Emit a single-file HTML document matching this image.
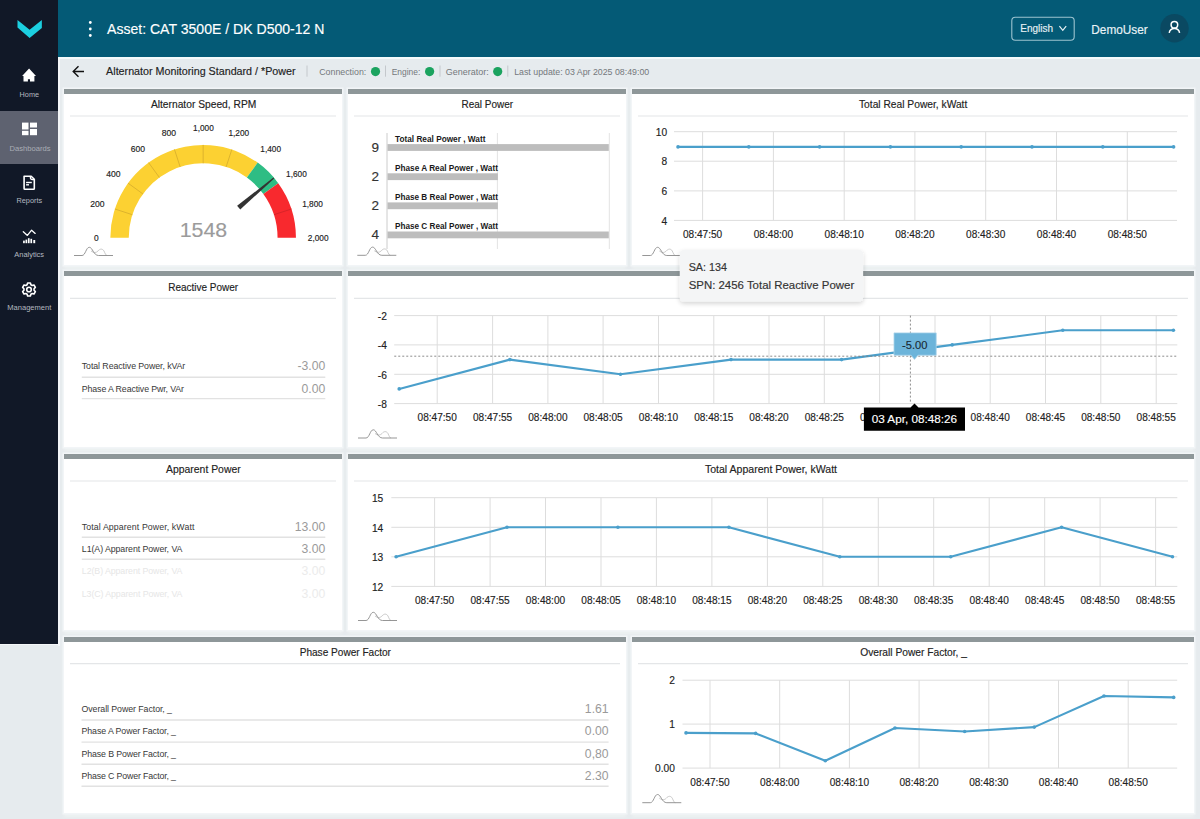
<!DOCTYPE html>
<html>
<head>
<meta charset="utf-8">
<style>
*{margin:0;padding:0;box-sizing:border-box}
html,body{width:1200px;height:819px;overflow:hidden;background:#E6EBEE;font-family:"Liberation Sans",sans-serif}
.abs{position:absolute}
#sidebar{position:absolute;left:0;top:0;width:58px;height:644px;background:#111827}
#sideedge{position:absolute;left:58px;top:0;width:2px;height:646px;background:#F4F6F8}
#sidebottom{position:absolute;left:0;top:644px;width:60px;height:1px;background:#F4F6F8}
#active{position:absolute;left:0;top:111px;width:58px;height:53px;background:#5E6270}
#header{position:absolute;left:58px;top:0;width:1142px;height:57px;background:#045A76}
.card{position:absolute;background:#FFFFFF;border-top:5px solid #8E9799;box-shadow:0 0 0 1.5px #F2F5F7,0 4px 3px #EEF2F2}
svg text{font-family:"Liberation Sans",sans-serif;stroke-width:0.15px}
#ov{position:absolute;left:0;top:0;width:1200px;height:819px}
</style>
</head>
<body>
<div id="sidebar"></div>
<div id="sideedge"></div>
<div id="sidebottom"></div>
<div id="active"></div>
<div id="header"></div>
<div class="abs" style="left:58px;top:57px;width:1142px;height:1.5px;background:#F4FAFB"></div>

<div class="card" style="left:64px;top:89px;width:278px;height:176px"></div>
<div class="card" style="left:348px;top:89px;width:278px;height:176px"></div>
<div class="card" style="left:632px;top:89px;width:562px;height:176px"></div>

<div class="card" style="left:64px;top:271px;width:278px;height:176px"></div>
<div class="card" style="left:348px;top:271px;width:846px;height:176px"></div>

<div class="card" style="left:64px;top:454px;width:278px;height:176px"></div>
<div class="card" style="left:348px;top:454px;width:846px;height:176px"></div>

<div class="card" style="left:64px;top:637px;width:562px;height:176px"></div>
<div class="card" style="left:632px;top:637px;width:562px;height:176px"></div>

<svg id="ov" width="1200" height="819" viewBox="0 0 1200 819">
<!-- logo -->
<polygon points="17.5,20 29.6,29.75 41.85,19.9 41.85,27.9 29.6,38 17.5,27.55" fill="#1CCFE0"/>

<!-- header -->
<g fill="#FFFFFF">
<circle cx="90.3" cy="22.5" r="1.4"/><circle cx="90.3" cy="29" r="1.4"/><circle cx="90.3" cy="35.5" r="1.4"/>
</g>
<text x="107" y="34.3" font-size="14.6" fill="#FFFFFF" textLength="217.5" lengthAdjust="spacingAndGlyphs" stroke="#FFFFFF" stroke-width="0.08">Asset: CAT 3500E / DK D500-12 N</text>


<!-- sidebar icons -->
<g fill="#FFFFFF">
<path d="M29.07,68.5 L36,75.9 L34.4,75.9 L34.4,81.5 L30,81.5 L30,79.2 L27.9,79.2 L27.9,81.5 L23.5,81.5 L23.5,75.9 L22.1,75.9 Z"/>
<rect x="22" y="122.6" width="6.5" height="6.9"/>
<rect x="22" y="130.8" width="6.5" height="4.4"/>
<rect x="30" y="122.6" width="7" height="4.9"/>
<rect x="30" y="129" width="7" height="6.2"/>
</g>
<g fill="none" stroke="#FFFFFF" stroke-width="1.6" stroke-linejoin="round" stroke-linecap="round">
<path d="M24.1,176.2 L31.2,176.2 L34.3,179.3 L34.3,188.6 Q34.3,189.3 33.6,189.3 L24.8,189.3 Q24.1,189.3 24.1,188.6 Z"/>
<path d="M30.4,176.6 L30.4,177.6 Q30.4,179.6 32.4,179.6 L34,179.6" stroke-width="1.3"/>
<path d="M23.3,231.8 L27.4,235.4 L31.6,230.2 L35.2,233.4" stroke-width="1.3"/>
<path d="M30.39,282.95 L27.61,282.95 L27.09,284.77 L25.86,285.48 L24.02,285.02 L22.63,287.43 L23.95,288.79 L23.95,290.21 L22.63,291.57 L24.02,293.98 L25.86,293.52 L27.09,294.23 L27.61,296.05 L30.39,296.05 L30.91,294.23 L32.14,293.52 L33.98,293.98 L35.37,291.57 L34.05,290.21 L34.05,288.79 L35.37,287.43 L33.98,285.02 L32.14,285.48 L30.91,284.77 Z"/>
<circle cx="29" cy="289.5" r="2.3"/>
</g>
<g fill="#FFFFFF">
<rect x="26.1" y="181.8" width="5.7" height="1.4"/>
<rect x="26.1" y="184.1" width="2.9" height="1.4"/>
<rect x="23.1" y="240.6" width="1.7" height="2.6"/>
<rect x="25.5" y="239.6" width="1.7" height="3.6"/>
<rect x="27.9" y="238.2" width="1.7" height="5"/>
<rect x="30.4" y="238.8" width="1.7" height="4.4"/>
<rect x="33.3" y="240" width="1.9" height="3.2"/>
</g>
<g font-size="7.2" fill="#B4B8C0" text-anchor="middle" class="ns">
<text x="29.3" y="96.8" textLength="19.4" lengthAdjust="spacingAndGlyphs">Home</text>
<text x="30" y="150.6" textLength="41" lengthAdjust="spacingAndGlyphs" fill="#A9ADB5" class="ns">Dashboards</text>
<text x="29.3" y="203.2" textLength="25.6" lengthAdjust="spacingAndGlyphs">Reports</text>
<text x="29.2" y="257" textLength="29.7" lengthAdjust="spacingAndGlyphs">Analytics</text>
<text x="29.3" y="310.3" textLength="44" lengthAdjust="spacingAndGlyphs">Management</text>
</g>

<!-- header right -->
<rect x="1011.8" y="17.2" width="62.4" height="23" rx="3.5" fill="none" stroke="#9CC3D0" stroke-width="1.1"/>
<text x="1020.3" y="32" font-size="11" fill="#E8F2F5" textLength="32.7" lengthAdjust="spacingAndGlyphs" stroke="#E8F2F5">English</text>
<polyline points="1059.4,26.2 1062.8,30.3 1066.2,26.2" fill="none" stroke="#E8F2F5" stroke-width="1.2"/>
<text x="1091.3" y="33.7" font-size="12.5" fill="#EAF3F6" textLength="56.5" lengthAdjust="spacingAndGlyphs" stroke="#EAF3F6">DemoUser</text>
<circle cx="1174.5" cy="28.2" r="14.2" fill="#0A4962"/>
<circle cx="1174.4" cy="24.7" r="3.3" fill="none" stroke="#FFFFFF" stroke-width="1.5"/>
<path d="M1169.2,32.8 A5.3,5.3 0 0 1 1179.6,32.8" fill="none" stroke="#FFFFFF" stroke-width="1.5"/>

<!-- subheader -->
<path d="M84,71.5 L73.5,71.5 M78.5,66.2 L73.2,71.5 L78.5,76.8" fill="none" stroke="#111111" stroke-width="1.4"/>
<text x="106.1" y="75" font-size="10.5" fill="#222222" textLength="189.5" lengthAdjust="spacingAndGlyphs" stroke="#222222" stroke-width="0.18">Alternator Monitoring Standard / *Power</text>
<g stroke="#C4C8CC" stroke-width="1">
<line x1="307" y1="65.5" x2="307" y2="76.7"/>
<line x1="385.5" y1="65.5" x2="385.5" y2="76.7"/>
<line x1="440" y1="65.5" x2="440" y2="76.7"/>
<line x1="507.8" y1="65.5" x2="507.8" y2="76.7"/>
</g>
<g font-size="9.3" fill="#74787C" class="ns">
<text x="319.2" y="74.7" textLength="47.1" lengthAdjust="spacingAndGlyphs">Connection:</text>
<text x="391.7" y="74.7" textLength="28.6" lengthAdjust="spacingAndGlyphs">Engine:</text>
<text x="445.8" y="74.7" textLength="42.9" lengthAdjust="spacingAndGlyphs">Generator:</text>
<text x="514.2" y="74.7" textLength="135" lengthAdjust="spacingAndGlyphs">Last update: 03 Apr 2025 08:49:00</text>
</g>
<g fill="#1BA35F">
<circle cx="375.5" cy="71.6" r="4.6"/>
<circle cx="429.6" cy="71.6" r="4.6"/>
<circle cx="497.7" cy="71.6" r="4.6"/>
</g>

<!-- card titles -->
<g font-size="10.5" fill="#222222" stroke="#222222">
<text x="150.9" y="108" textLength="105.4" lengthAdjust="spacingAndGlyphs">Alternator Speed, RPM</text>
<text x="461.5" y="108" textLength="51.5" lengthAdjust="spacingAndGlyphs">Real Power</text>
<text x="859" y="108.3" textLength="108.3" lengthAdjust="spacingAndGlyphs">Total Real Power, kWatt</text>
<text x="168.2" y="290.7" textLength="70" lengthAdjust="spacingAndGlyphs">Reactive Power</text>
<text x="166" y="473.3" textLength="74.7" lengthAdjust="spacingAndGlyphs">Apparent Power</text>
<text x="704.9" y="472.7" textLength="132.1" lengthAdjust="spacingAndGlyphs">Total Apparent Power, kWatt</text>
<text x="299.7" y="655.7" textLength="91.3" lengthAdjust="spacingAndGlyphs">Phase Power Factor</text>
<text x="860.2" y="656.2" textLength="106.8" lengthAdjust="spacingAndGlyphs">Overall Power Factor, _</text>
</g>
<!-- title dividers -->
<g stroke="#E4E6E8" stroke-width="1.2">
<line x1="70" y1="116" x2="336" y2="116"/>
<line x1="354" y1="116" x2="620" y2="116"/>
<line x1="638" y1="116" x2="1188" y2="116"/>
<line x1="70" y1="298.3" x2="336" y2="298.3"/>
<line x1="354" y1="298.3" x2="1188" y2="298.3"/>
<line x1="70" y1="481" x2="336" y2="481"/>
<line x1="354" y1="481" x2="1188" y2="481"/>
<line x1="70" y1="663.7" x2="620" y2="663.7"/>
<line x1="638" y1="663.7" x2="1188" y2="663.7"/>
</g>
<!--CHARTS-->
<!-- chart A -->
<g stroke="#DDDDDD" stroke-width="1">
<line x1="674.0" y1="131.7" x2="1177.0" y2="131.7"/>
<line x1="674.0" y1="161.2" x2="1177.0" y2="161.2"/>
<line x1="674.0" y1="190.9" x2="1177.0" y2="190.9"/>
<line x1="674.0" y1="220.4" x2="1177.0" y2="220.4"/>
<line x1="702.6" y1="131.7" x2="702.6" y2="220.4"/>
<line x1="773.4" y1="131.7" x2="773.4" y2="220.4"/>
<line x1="844.2" y1="131.7" x2="844.2" y2="220.4"/>
<line x1="914.9" y1="131.7" x2="914.9" y2="220.4"/>
<line x1="985.7" y1="131.7" x2="985.7" y2="220.4"/>
<line x1="1056.5" y1="131.7" x2="1056.5" y2="220.4"/>
<line x1="1127.3" y1="131.7" x2="1127.3" y2="220.4"/>
</g>
<g font-size="10.2" fill="#222222" stroke="#222222" stroke-width="0.2">
<text x="667.1" y="135.9" text-anchor="end">10</text>
<text x="667.1" y="165.4" text-anchor="end">8</text>
<text x="667.1" y="195.1" text-anchor="end">6</text>
<text x="667.1" y="224.6" text-anchor="end">4</text>
<text x="702.6" y="238.0" text-anchor="middle" textLength="39.3" lengthAdjust="spacingAndGlyphs">08:47:50</text>
<text x="773.4" y="238.0" text-anchor="middle" textLength="39.3" lengthAdjust="spacingAndGlyphs">08:48:00</text>
<text x="844.2" y="238.0" text-anchor="middle" textLength="39.3" lengthAdjust="spacingAndGlyphs">08:48:10</text>
<text x="914.9" y="238.0" text-anchor="middle" textLength="39.3" lengthAdjust="spacingAndGlyphs">08:48:20</text>
<text x="985.7" y="238.0" text-anchor="middle" textLength="39.3" lengthAdjust="spacingAndGlyphs">08:48:30</text>
<text x="1056.5" y="238.0" text-anchor="middle" textLength="39.3" lengthAdjust="spacingAndGlyphs">08:48:40</text>
<text x="1127.3" y="238.0" text-anchor="middle" textLength="39.3" lengthAdjust="spacingAndGlyphs">08:48:50</text>
</g>
<polyline points="678.0,146.9 748.8,146.9 819.6,146.9 890.4,146.9 961.2,146.9 1032.0,146.9 1102.8,146.9 1173.6,146.9" fill="none" stroke="#4A9FCB" stroke-width="2.1" stroke-linejoin="round"/>
<g fill="#4A9FCB">
<circle cx="678.0" cy="146.9" r="1.8"/>
<circle cx="748.8" cy="146.9" r="1.8"/>
<circle cx="819.6" cy="146.9" r="1.8"/>
<circle cx="890.4" cy="146.9" r="1.8"/>
<circle cx="961.2" cy="146.9" r="1.8"/>
<circle cx="1032.0" cy="146.9" r="1.8"/>
<circle cx="1102.8" cy="146.9" r="1.8"/>
<circle cx="1173.6" cy="146.9" r="1.8"/>
</g>
<path d="M659.3,251.0 C662.3,253.0 664.3,253.0 666.3,251.0 C668.3,248.5 670.8,248.5 672.3,251.0 C673.3,253.5 674.3,255.5 675.3,255.5" fill="none" stroke="#C4C4C4" stroke-width="0.9"/>
<path d="M642.3,255.5 L650.3,255.5 C653.8,255.5 654.3,247.3 657.6,247.3 C660.9,247.3 661.8,255.5 666.8,255.5 L681.3,255.5" fill="none" stroke="#8A8A8A" stroke-width="0.9"/>
<!-- chart B -->
<g stroke="#DDDDDD" stroke-width="1">
<line x1="394.2" y1="315.6" x2="1177.3" y2="315.6"/>
<line x1="394.2" y1="344.9" x2="1177.3" y2="344.9"/>
<line x1="394.2" y1="374.3" x2="1177.3" y2="374.3"/>
<line x1="394.2" y1="403.6" x2="1177.3" y2="403.6"/>
<line x1="437.2" y1="315.6" x2="437.2" y2="403.6"/>
<line x1="492.6" y1="315.6" x2="492.6" y2="403.6"/>
<line x1="547.9" y1="315.6" x2="547.9" y2="403.6"/>
<line x1="603.1" y1="315.6" x2="603.1" y2="403.6"/>
<line x1="658.5" y1="315.6" x2="658.5" y2="403.6"/>
<line x1="713.8" y1="315.6" x2="713.8" y2="403.6"/>
<line x1="769.0" y1="315.6" x2="769.0" y2="403.6"/>
<line x1="824.3" y1="315.6" x2="824.3" y2="403.6"/>
<line x1="879.6" y1="315.6" x2="879.6" y2="403.6"/>
<line x1="935.0" y1="315.6" x2="935.0" y2="403.6"/>
<line x1="990.2" y1="315.6" x2="990.2" y2="403.6"/>
<line x1="1045.5" y1="315.6" x2="1045.5" y2="403.6"/>
<line x1="1100.8" y1="315.6" x2="1100.8" y2="403.6"/>
<line x1="1156.2" y1="315.6" x2="1156.2" y2="403.6"/>
</g>
<g font-size="10.2" fill="#222222" stroke="#222222" stroke-width="0.2">
<text x="386.8" y="319.8" text-anchor="end">-2</text>
<text x="386.8" y="349.1" text-anchor="end">-4</text>
<text x="386.8" y="378.5" text-anchor="end">-6</text>
<text x="386.8" y="407.8" text-anchor="end">-8</text>
<text x="437.2" y="421.3" text-anchor="middle" textLength="39.3" lengthAdjust="spacingAndGlyphs">08:47:50</text>
<text x="492.6" y="421.3" text-anchor="middle" textLength="39.3" lengthAdjust="spacingAndGlyphs">08:47:55</text>
<text x="547.9" y="421.3" text-anchor="middle" textLength="39.3" lengthAdjust="spacingAndGlyphs">08:48:00</text>
<text x="603.1" y="421.3" text-anchor="middle" textLength="39.3" lengthAdjust="spacingAndGlyphs">08:48:05</text>
<text x="658.5" y="421.3" text-anchor="middle" textLength="39.3" lengthAdjust="spacingAndGlyphs">08:48:10</text>
<text x="713.8" y="421.3" text-anchor="middle" textLength="39.3" lengthAdjust="spacingAndGlyphs">08:48:15</text>
<text x="769.0" y="421.3" text-anchor="middle" textLength="39.3" lengthAdjust="spacingAndGlyphs">08:48:20</text>
<text x="824.3" y="421.3" text-anchor="middle" textLength="39.3" lengthAdjust="spacingAndGlyphs">08:48:25</text>
<text x="879.6" y="421.3" text-anchor="middle" textLength="39.3" lengthAdjust="spacingAndGlyphs">08:48:30</text>
<text x="935.0" y="421.3" text-anchor="middle" textLength="39.3" lengthAdjust="spacingAndGlyphs">08:48:35</text>
<text x="990.2" y="421.3" text-anchor="middle" textLength="39.3" lengthAdjust="spacingAndGlyphs">08:48:40</text>
<text x="1045.5" y="421.3" text-anchor="middle" textLength="39.3" lengthAdjust="spacingAndGlyphs">08:48:45</text>
<text x="1100.8" y="421.3" text-anchor="middle" textLength="39.3" lengthAdjust="spacingAndGlyphs">08:48:50</text>
<text x="1156.2" y="421.3" text-anchor="middle" textLength="39.3" lengthAdjust="spacingAndGlyphs">08:48:55</text>
</g>
<polyline points="399.2,388.9 509.9,359.6 620.5,374.3 731.0,359.6 841.6,359.6 952.2,344.9 1062.8,330.3 1173.4,330.3" fill="none" stroke="#4A9FCB" stroke-width="2.1" stroke-linejoin="round"/>
<g fill="#4A9FCB">
<circle cx="399.2" cy="388.9" r="1.8"/>
<circle cx="509.9" cy="359.6" r="1.8"/>
<circle cx="620.5" cy="374.3" r="1.8"/>
<circle cx="731.0" cy="359.6" r="1.8"/>
<circle cx="841.6" cy="359.6" r="1.8"/>
<circle cx="952.2" cy="344.9" r="1.8"/>
<circle cx="1062.8" cy="330.3" r="1.8"/>
<circle cx="1173.4" cy="330.3" r="1.8"/>
</g>
<path d="M375.0,433.5 C378.0,435.5 380.0,435.5 382.0,433.5 C384.0,431.0 386.5,431.0 388.0,433.5 C389.0,436.0 390.0,438.0 391.0,438.0" fill="none" stroke="#C4C4C4" stroke-width="0.9"/>
<path d="M358.0,438.0 L366.0,438.0 C369.5,438.0 370.0,429.8 373.3,429.8 C376.6,429.8 377.5,438.0 382.5,438.0 L397.0,438.0" fill="none" stroke="#8A8A8A" stroke-width="0.9"/>
<!-- chart C -->
<g stroke="#DDDDDD" stroke-width="1">
<line x1="391.3" y1="497.7" x2="1177.3" y2="497.7"/>
<line x1="391.3" y1="527.3" x2="1177.3" y2="527.3"/>
<line x1="391.3" y1="556.8" x2="1177.3" y2="556.8"/>
<line x1="391.3" y1="586.4" x2="1177.3" y2="586.4"/>
<line x1="434.6" y1="497.7" x2="434.6" y2="586.4"/>
<line x1="490.1" y1="497.7" x2="490.1" y2="586.4"/>
<line x1="545.5" y1="497.7" x2="545.5" y2="586.4"/>
<line x1="601.0" y1="497.7" x2="601.0" y2="586.4"/>
<line x1="656.4" y1="497.7" x2="656.4" y2="586.4"/>
<line x1="711.9" y1="497.7" x2="711.9" y2="586.4"/>
<line x1="767.4" y1="497.7" x2="767.4" y2="586.4"/>
<line x1="822.8" y1="497.7" x2="822.8" y2="586.4"/>
<line x1="878.3" y1="497.7" x2="878.3" y2="586.4"/>
<line x1="933.7" y1="497.7" x2="933.7" y2="586.4"/>
<line x1="989.2" y1="497.7" x2="989.2" y2="586.4"/>
<line x1="1044.7" y1="497.7" x2="1044.7" y2="586.4"/>
<line x1="1100.1" y1="497.7" x2="1100.1" y2="586.4"/>
<line x1="1155.6" y1="497.7" x2="1155.6" y2="586.4"/>
</g>
<g font-size="10.2" fill="#222222" stroke="#222222" stroke-width="0.2">
<text x="383.3" y="501.9" text-anchor="end">15</text>
<text x="383.3" y="531.5" text-anchor="end">14</text>
<text x="383.3" y="561.0" text-anchor="end">13</text>
<text x="383.3" y="590.6" text-anchor="end">12</text>
<text x="434.6" y="604.0" text-anchor="middle" textLength="39.3" lengthAdjust="spacingAndGlyphs">08:47:50</text>
<text x="490.1" y="604.0" text-anchor="middle" textLength="39.3" lengthAdjust="spacingAndGlyphs">08:47:55</text>
<text x="545.5" y="604.0" text-anchor="middle" textLength="39.3" lengthAdjust="spacingAndGlyphs">08:48:00</text>
<text x="601.0" y="604.0" text-anchor="middle" textLength="39.3" lengthAdjust="spacingAndGlyphs">08:48:05</text>
<text x="656.4" y="604.0" text-anchor="middle" textLength="39.3" lengthAdjust="spacingAndGlyphs">08:48:10</text>
<text x="711.9" y="604.0" text-anchor="middle" textLength="39.3" lengthAdjust="spacingAndGlyphs">08:48:15</text>
<text x="767.4" y="604.0" text-anchor="middle" textLength="39.3" lengthAdjust="spacingAndGlyphs">08:48:20</text>
<text x="822.8" y="604.0" text-anchor="middle" textLength="39.3" lengthAdjust="spacingAndGlyphs">08:48:25</text>
<text x="878.3" y="604.0" text-anchor="middle" textLength="39.3" lengthAdjust="spacingAndGlyphs">08:48:30</text>
<text x="933.7" y="604.0" text-anchor="middle" textLength="39.3" lengthAdjust="spacingAndGlyphs">08:48:35</text>
<text x="989.2" y="604.0" text-anchor="middle" textLength="39.3" lengthAdjust="spacingAndGlyphs">08:48:40</text>
<text x="1044.7" y="604.0" text-anchor="middle" textLength="39.3" lengthAdjust="spacingAndGlyphs">08:48:45</text>
<text x="1100.1" y="604.0" text-anchor="middle" textLength="39.3" lengthAdjust="spacingAndGlyphs">08:48:50</text>
<text x="1155.6" y="604.0" text-anchor="middle" textLength="39.3" lengthAdjust="spacingAndGlyphs">08:48:55</text>
</g>
<polyline points="396.1,556.8 507.0,527.3 617.9,527.3 728.9,527.3 839.8,556.8 950.7,556.8 1061.6,527.3 1172.5,556.8" fill="none" stroke="#4A9FCB" stroke-width="2.1" stroke-linejoin="round"/>
<g fill="#4A9FCB">
<circle cx="396.1" cy="556.8" r="1.8"/>
<circle cx="507.0" cy="527.3" r="1.8"/>
<circle cx="617.9" cy="527.3" r="1.8"/>
<circle cx="728.9" cy="527.3" r="1.8"/>
<circle cx="839.8" cy="556.8" r="1.8"/>
<circle cx="950.7" cy="556.8" r="1.8"/>
<circle cx="1061.6" cy="527.3" r="1.8"/>
<circle cx="1172.5" cy="556.8" r="1.8"/>
</g>
<path d="M375.0,616.0 C378.0,618.0 380.0,618.0 382.0,616.0 C384.0,613.5 386.5,613.5 388.0,616.0 C389.0,618.5 390.0,620.5 391.0,620.5" fill="none" stroke="#C4C4C4" stroke-width="0.9"/>
<path d="M358.0,620.5 L366.0,620.5 C369.5,620.5 370.0,612.3 373.3,612.3 C376.6,612.3 377.5,620.5 382.5,620.5 L397.0,620.5" fill="none" stroke="#8A8A8A" stroke-width="0.9"/>
<!-- chart D -->
<g stroke="#DDDDDD" stroke-width="1">
<line x1="682.5" y1="680.2" x2="1177.2" y2="680.2"/>
<line x1="682.5" y1="724.1" x2="1177.2" y2="724.1"/>
<line x1="682.5" y1="768.1" x2="1177.2" y2="768.1"/>
<line x1="710.0" y1="680.2" x2="710.0" y2="768.1"/>
<line x1="779.7" y1="680.2" x2="779.7" y2="768.1"/>
<line x1="849.4" y1="680.2" x2="849.4" y2="768.1"/>
<line x1="919.1" y1="680.2" x2="919.1" y2="768.1"/>
<line x1="988.8" y1="680.2" x2="988.8" y2="768.1"/>
<line x1="1058.5" y1="680.2" x2="1058.5" y2="768.1"/>
<line x1="1128.2" y1="680.2" x2="1128.2" y2="768.1"/>
</g>
<g font-size="10.2" fill="#222222" stroke="#222222" stroke-width="0.2">
<text x="674.8" y="684.4" text-anchor="end">2</text>
<text x="674.8" y="728.3" text-anchor="end">1</text>
<text x="674.8" y="772.3" text-anchor="end">0.00</text>
<text x="710.0" y="786.0" text-anchor="middle" textLength="39.3" lengthAdjust="spacingAndGlyphs">08:47:50</text>
<text x="779.7" y="786.0" text-anchor="middle" textLength="39.3" lengthAdjust="spacingAndGlyphs">08:48:00</text>
<text x="849.4" y="786.0" text-anchor="middle" textLength="39.3" lengthAdjust="spacingAndGlyphs">08:48:10</text>
<text x="919.1" y="786.0" text-anchor="middle" textLength="39.3" lengthAdjust="spacingAndGlyphs">08:48:20</text>
<text x="988.8" y="786.0" text-anchor="middle" textLength="39.3" lengthAdjust="spacingAndGlyphs">08:48:30</text>
<text x="1058.5" y="786.0" text-anchor="middle" textLength="39.3" lengthAdjust="spacingAndGlyphs">08:48:40</text>
<text x="1128.2" y="786.0" text-anchor="middle" textLength="39.3" lengthAdjust="spacingAndGlyphs">08:48:50</text>
</g>
<polyline points="686.0,732.9 755.7,733.4 825.3,760.7 895.0,728.0 964.7,731.5 1034.3,727.1 1104.0,696.0 1173.7,697.4" fill="none" stroke="#4A9FCB" stroke-width="2.1" stroke-linejoin="round"/>
<g fill="#4A9FCB">
<circle cx="686.0" cy="732.9" r="1.8"/>
<circle cx="755.7" cy="733.4" r="1.8"/>
<circle cx="825.3" cy="760.7" r="1.8"/>
<circle cx="895.0" cy="728.0" r="1.8"/>
<circle cx="964.7" cy="731.5" r="1.8"/>
<circle cx="1034.3" cy="727.1" r="1.8"/>
<circle cx="1104.0" cy="696.0" r="1.8"/>
<circle cx="1173.7" cy="697.4" r="1.8"/>
</g>
<path d="M659.3,798.2 C662.3,800.2 664.3,800.2 666.3,798.2 C668.3,795.7 670.8,795.7 672.3,798.2 C673.3,800.7 674.3,802.7 675.3,802.7" fill="none" stroke="#C4C4C4" stroke-width="0.9"/>
<path d="M642.3,802.7 L650.3,802.7 C653.8,802.7 654.3,794.5 657.6,794.5 C660.9,794.5 661.8,802.7 666.8,802.7 L681.3,802.7" fill="none" stroke="#8A8A8A" stroke-width="0.9"/>
<!-- gauge -->
<path d="M110.35,237.70 A92.8,92.8 0 0 1 257.70,162.62 L246.88,177.51 A74.4,74.4 0 0 0 128.75,237.70 Z" fill="#FCD132"/>
<path d="M257.70,162.62 A92.8,92.8 0 0 1 278.23,183.15 L263.34,193.97 A74.4,74.4 0 0 0 246.88,177.51 Z" fill="#2EBD84"/>
<path d="M278.23,183.15 A92.8,92.8 0 0 1 295.95,237.70 L277.55,237.70 A74.4,74.4 0 0 0 263.34,193.97 Z" fill="#F8292E"/>
<line x1="132.39" y1="214.71" x2="114.89" y2="209.02" stroke="#D9B02C" stroke-width="0.9"/>
<line x1="142.96" y1="193.97" x2="128.07" y2="183.15" stroke="#D9B02C" stroke-width="0.9"/>
<line x1="159.42" y1="177.51" x2="148.60" y2="162.62" stroke="#D9B02C" stroke-width="0.9"/>
<line x1="180.16" y1="166.94" x2="174.47" y2="149.44" stroke="#D9B02C" stroke-width="0.9"/>
<line x1="203.15" y1="163.30" x2="203.15" y2="144.90" stroke="#D9B02C" stroke-width="0.9"/>
<line x1="226.14" y1="166.94" x2="231.83" y2="149.44" stroke="#D9B02C" stroke-width="0.9"/>
<line x1="273.91" y1="214.71" x2="291.41" y2="209.02" stroke="#D42428" stroke-width="0.9"/>
<polygon points="240.22,209.52 274.19,178.45 273.41,177.54 237.12,205.85" fill="#333333"/>
<g font-size="8.4" fill="#222222" text-anchor="middle" stroke="#222222">
<text x="96.4" y="240.6">0</text>
<text x="97.5" y="206.9" textLength="14.3" lengthAdjust="spacingAndGlyphs">200</text>
<text x="113.3" y="176.5" textLength="14.3" lengthAdjust="spacingAndGlyphs">400</text>
<text x="137.9" y="152.4" textLength="14.3" lengthAdjust="spacingAndGlyphs">600</text>
<text x="168.8" y="136.3" textLength="14.3" lengthAdjust="spacingAndGlyphs">800</text>
<text x="203.4" y="131.3" textLength="20.7" lengthAdjust="spacingAndGlyphs">1,000</text>
<text x="238.8" y="136.3" textLength="20.7" lengthAdjust="spacingAndGlyphs">1,200</text>
<text x="270.7" y="152.2" textLength="20.7" lengthAdjust="spacingAndGlyphs">1,400</text>
<text x="296.4" y="176.5" textLength="20.7" lengthAdjust="spacingAndGlyphs">1,600</text>
<text x="312.5" y="206.7" textLength="20.7" lengthAdjust="spacingAndGlyphs">1,800</text>
<text x="318.2" y="240.6" textLength="20.7" lengthAdjust="spacingAndGlyphs">2,000</text>
</g>
<text x="203.5" y="237.3" font-size="21" fill="#9B9B9B" text-anchor="middle" textLength="47.5" lengthAdjust="spacingAndGlyphs" stroke="#9B9B9B">1548</text>
<path d="M91.0,251.0 C94.0,253.0 96.0,253.0 98.0,251.0 C100.0,248.5 102.5,248.5 104.0,251.0 C105.0,253.5 106.0,255.5 107.0,255.5" fill="none" stroke="#C4C4C4" stroke-width="0.9"/>
<path d="M74.0,255.5 L82.0,255.5 C85.5,255.5 86.0,247.3 89.3,247.3 C92.6,247.3 93.5,255.5 98.5,255.5 L113.0,255.5" fill="none" stroke="#8A8A8A" stroke-width="0.9"/>
<!-- bars -->
<g stroke="#E3E3E3" stroke-width="1">
<line x1="497.4" y1="133" x2="497.4" y2="249"/>
<line x1="609.3" y1="133" x2="609.3" y2="249"/>
</g>
<line x1="387" y1="133" x2="387" y2="249" stroke="#CCCCCC" stroke-width="1"/>
<g fill="#BDBDBD">
<rect x="387.5" y="144.1" width="221.3" height="6.8"/>
<rect x="387.5" y="173.3" width="110.4" height="6.8"/>
<rect x="387.5" y="202.4" width="110.4" height="6.8"/>
<rect x="387.5" y="231.5" width="221.3" height="6.8"/>
</g>
<g font-size="8.8" font-weight="bold" fill="#1A1A1A" class="ns">
<text x="395" y="141.8" textLength="90.4" lengthAdjust="spacingAndGlyphs">Total Real Power , Watt</text>
<text x="395" y="170.8" textLength="102.9" lengthAdjust="spacingAndGlyphs">Phase A Real Power , Watt</text>
<text x="395" y="199.9" textLength="102.9" lengthAdjust="spacingAndGlyphs">Phase B Real Power , Watt</text>
<text x="395" y="229" textLength="102.9" lengthAdjust="spacingAndGlyphs">Phase C Real Power , Watt</text>
</g>
<g font-size="13.5" fill="#333333" text-anchor="middle" stroke="#333333">
<text x="375.3" y="152">9</text>
<text x="375.3" y="181">2</text>
<text x="375.3" y="210">2</text>
<text x="375.3" y="239">4</text>
</g>
<path d="M374.3,250.8 C377.3,252.8 379.3,252.8 381.3,250.8 C383.3,248.3 385.8,248.3 387.3,250.8 C388.3,253.3 389.3,255.3 390.3,255.3" fill="none" stroke="#C4C4C4" stroke-width="0.9"/>
<path d="M357.3,255.3 L365.3,255.3 C368.8,255.3 369.3,247.1 372.6,247.1 C375.9,247.1 376.8,255.3 381.8,255.3 L396.3,255.3" fill="none" stroke="#8A8A8A" stroke-width="0.9"/>
<!-- lists -->
<text x="81.8" y="368.9" font-size="8.8" fill="#383838" class="ns" textLength="103.5" lengthAdjust="spacing">Total Reactive Power, kVAr</text>
<text x="325.3" y="369.9" font-size="12.2" fill="#9A9A9A" class="ns" text-anchor="end">-3.00</text>
<line x1="81.8" y1="377.2" x2="325.3" y2="377.2" stroke="#E2E2E2" stroke-width="1.4"/>
<text x="81.8" y="391.5" font-size="8.8" fill="#383838" class="ns" textLength="102.2" lengthAdjust="spacing">Phase A Reactive Pwr, VAr</text>
<text x="325.3" y="392.5" font-size="12.2" fill="#9A9A9A" class="ns" text-anchor="end">0.00</text>
<line x1="81.8" y1="398.6" x2="325.3" y2="398.6" stroke="#E2E2E2" stroke-width="1.4"/>
<text x="81.8" y="530" font-size="8.8" fill="#383838" class="ns" textLength="112.6" lengthAdjust="spacing">Total Apparent Power, kWatt</text>
<text x="325.3" y="531" font-size="12.2" fill="#9A9A9A" class="ns" text-anchor="end">13.00</text>
<line x1="81.8" y1="537.3" x2="325.3" y2="537.3" stroke="#E2E2E2" stroke-width="1.4"/>
<text x="81.8" y="551.9" font-size="8.8" fill="#383838" class="ns" textLength="100.6" lengthAdjust="spacing">L1(A) Apparent Power, VA</text>
<text x="325.3" y="552.9" font-size="12.2" fill="#9A9A9A" class="ns" text-anchor="end">3.00</text>
<line x1="81.8" y1="559.3" x2="325.3" y2="559.3" stroke="#E2E2E2" stroke-width="1.4"/>
<text x="81.8" y="574" font-size="8.8" fill="#E6E6E6" class="ns" textLength="100.6" lengthAdjust="spacing">L2(B) Apparent Power, VA</text>
<text x="325.3" y="575" font-size="12.2" fill="#EBEBEB" class="ns" text-anchor="end">3.00</text>
<text x="81.8" y="596.5" font-size="8.8" fill="#E6E6E6" class="ns" textLength="100.6" lengthAdjust="spacing">L3(C) Apparent Power, VA</text>
<text x="325.3" y="597.5" font-size="12.2" fill="#EBEBEB" class="ns" text-anchor="end">3.00</text>
<text x="81.5" y="711.8" font-size="8.8" fill="#383838" class="ns" textLength="90.5" lengthAdjust="spacing">Overall Power Factor, _</text>
<text x="608.6" y="712.8" font-size="12.2" fill="#9A9A9A" class="ns" text-anchor="end">1.61</text>
<line x1="81.5" y1="720" x2="608.6" y2="720" stroke="#E2E2E2" stroke-width="1.4"/>
<text x="81.5" y="733.6" font-size="8.8" fill="#383838" class="ns" textLength="94.5" lengthAdjust="spacing">Phase A Power Factor, _</text>
<text x="608.6" y="734.6" font-size="12.2" fill="#9A9A9A" class="ns" text-anchor="end">0.00</text>
<line x1="81.5" y1="742.1" x2="608.6" y2="742.1" stroke="#E2E2E2" stroke-width="1.4"/>
<text x="81.5" y="756.5" font-size="8.8" fill="#383838" class="ns" textLength="94.5" lengthAdjust="spacing">Phase B Power Factor, _</text>
<text x="608.6" y="757.5" font-size="12.2" fill="#9A9A9A" class="ns" text-anchor="end">0,80</text>
<line x1="81.5" y1="764.2" x2="608.6" y2="764.2" stroke="#E2E2E2" stroke-width="1.4"/>
<text x="81.5" y="778.6" font-size="8.8" fill="#383838" class="ns" textLength="94.5" lengthAdjust="spacing">Phase C Power Factor, _</text>
<text x="608.6" y="779.6" font-size="12.2" fill="#9A9A9A" class="ns" text-anchor="end">2.30</text>
<line x1="81.5" y1="786.3" x2="608.6" y2="786.3" stroke="#E2E2E2" stroke-width="1.4"/>
<!-- overlays -->
<line x1="910.4" y1="315.6" x2="910.4" y2="403.6" stroke="#808080" stroke-width="0.9" stroke-dasharray="2,2"/>
<line x1="394.25" y1="356.2" x2="1177.3" y2="356.2" stroke="#808080" stroke-width="0.9" stroke-dasharray="2,2"/>
<path d="M894,332.9 L936.2,332.9 L936.2,355.2 L918,355.2 L914.5,359.4 L911,355.2 L894,355.2 Z" fill="#6CB4DA" stroke="#A9D4EA" stroke-width="0.8"/>
<text x="914.7" y="348.6" font-size="11.5" fill="#1B2A33" stroke="#1B2A33" stroke-width="0.3" text-anchor="middle" textLength="25.4" lengthAdjust="spacingAndGlyphs">-5.00</text>
<path d="M863.9,407.6 L910.5,407.6 L914.5,403.4 L918.5,407.6 L965,407.6 L965,430.7 L863.9,430.7 Z" fill="#000000"/>
<text x="871.7" y="422.6" font-size="11.5" fill="#FFFFFF" textLength="85.3" lengthAdjust="spacingAndGlyphs" stroke="#FFFFFF">03 Apr, 08:48:26</text>
<defs><filter id="sh" x="-10%" y="-30%" width="120%" height="160%"><feGaussianBlur in="SourceAlpha" stdDeviation="2.5"/><feOffset dy="2"/><feComponentTransfer><feFuncA type="linear" slope="0.18"/></feComponentTransfer><feMerge><feMergeNode/><feMergeNode in="SourceGraphic"/></feMerge></filter></defs>
<rect x="679.8" y="250.1" width="183.3" height="51.3" rx="4" fill="#F4F5F6" filter="url(#sh)"/>
<text x="688.7" y="271.2" font-size="10.6" fill="#333333" textLength="38.3" lengthAdjust="spacingAndGlyphs" stroke="#333333">SA: 134</text>
<text x="688.7" y="288.6" font-size="10.6" fill="#333333" textLength="165.5" lengthAdjust="spacingAndGlyphs" stroke="#333333">SPN: 2456 Total Reactive Power</text>
<!--/CHARTS-->
</svg>
</body>
</html>
